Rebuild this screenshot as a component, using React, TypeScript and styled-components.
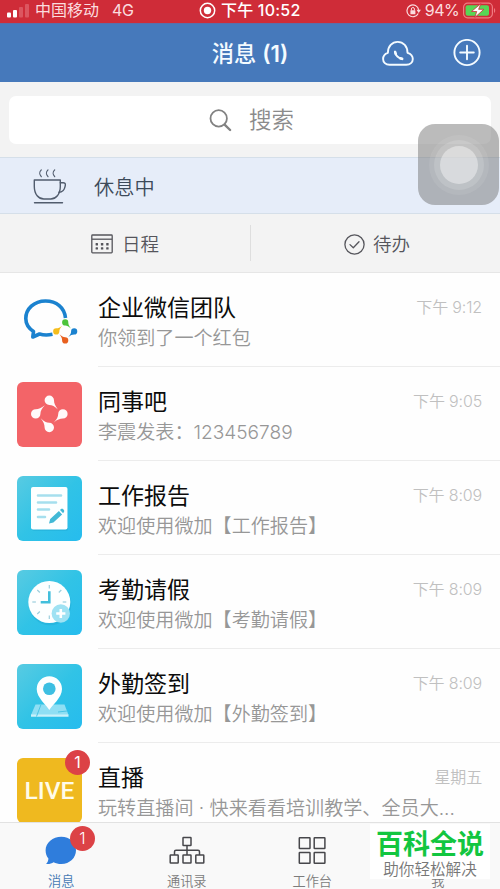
import React from 'react';
import styled, { createGlobalStyle } from 'styled-components';

const GlobalStyle = createGlobalStyle`
  * { box-sizing: border-box; }
  body {
    margin: 0;
    background: #fefefe;
    font-family: Inter, "Noto Sans CJK SC", sans-serif;
    overflow: hidden;
  }
  svg { display: block; flex: none; }
`;

const Screen = styled.div`
  position: relative;
  width: 500px;
  height: 889px;
  overflow: hidden;
  display: flex;
  flex-direction: column;
`;

const StatusBar = styled.div`
  flex: none;
  height: 23px;
  padding: 0 4px 2px 7px;
  display: grid;
  grid-template-columns: 192px 1fr auto;
  align-items: center;
  background: #cf2c38;
  color: #fbdcdf;
  font-size: 16px;
  line-height: 21px;
  white-space: nowrap;
`;

const StatusGroup = styled.div<{ $gap: number }>`
  display: flex;
  align-items: center;
  gap: ${(p) => p.$gap}px;
`;

const Clock = styled.span`
  color: #fff;
  font-weight: 500;
  letter-spacing: 0.2px;
`;

const Network = styled.span`
  margin-left: 7px;
  letter-spacing: -0.3px;
`;

const Percent = styled.span`
  letter-spacing: -0.6px;
`;

const NavBar = styled.header`
  flex: none;
  height: 59px;
  display: grid;
  grid-template-columns: 1fr auto 1fr;
  align-items: center;
  background: #4679bb;
  border-top: 1px solid #5c6ea8;
  color: #f4fbff;
`;

const NavTitle = styled.h1`
  grid-column: 2;
  margin: 1px 0 0;
  font-size: 22.3px;
  line-height: 30px;
  font-weight: 500;
`;

const NavCount = styled.span`
  font-weight: 600;
`;

const NavActions = styled.div`
  display: flex;
  justify-content: flex-end;
  align-items: center;
  gap: 39px;
  padding-right: 19px;
`;

const SearchArea = styled.div`
  flex: none;
  height: 75px;
  padding: 14px 9px 0;
  background: #f3f3f3;
`;

const SearchBox = styled.div`
  height: 48px;
  border-radius: 7px;
  background: #fff;
  display: flex;
  align-items: center;
  padding-left: 200px;
  gap: 17px;
  color: #8b8b8b;
  font-size: 22.5px;
  font-weight: 350;
  line-height: 30px;
`;

const Resting = styled.div`
  flex: none;
  height: 57px;
  padding: 2px 0 0 33px;
  display: flex;
  align-items: center;
  gap: 27px;
  background: #e6edf9;
  border-top: 1px solid #d5dfe9;
  border-bottom: 1px solid #d5dfe9;
  color: #3d4a5a;
  font-size: 20.2px;
  font-weight: 350;
`;

const Shortcuts = styled.div`
  flex: none;
  height: 59px;
  display: grid;
  grid-template-columns: 250px 1px 1fr;
  align-items: center;
  background: #f3f3f3;
  border-bottom: 1px solid #e6e6e6;
`;

const Shortcut = styled.div<{ $inset: number; $gap: number }>`
  display: flex;
  align-items: center;
  padding: 2px 0 0 ${(p) => p.$inset}px;
  gap: ${(p) => p.$gap}px;
  color: #55555b;
  font-size: 18.5px;
  font-weight: 350;
  line-height: 28px;
`;

const Divider = styled.div`
  height: 36px;
  background: #dedede;
`;

const List = styled.main`
  flex: 1;
  min-height: 0;
  overflow: hidden;
  background: #fefefe;
`;

const Row = styled.article`
  height: 94px;
  padding-left: 17px;
  display: flex;
  gap: 16px;
`;

const Avatar = styled.div<{ $bg: string }>`
  position: relative;
  flex: none;
  width: 65px;
  height: 65px;
  margin-top: 15px;
  border-radius: 6px;
  background: ${(p) => p.$bg};
  display: flex;
  align-items: center;
  justify-content: center;
`;

const LiveText = styled.span`
  color: #fffbe9;
  font-family: Roboto, sans-serif;
  font-size: 24.5px;
  font-weight: 500;
`;

const Badge = styled.span<{ $top: number; $left: number }>`
  position: absolute;
  top: ${(p) => p.$top}px;
  left: ${(p) => p.$left}px;
  width: 25px;
  height: 25px;
  border-radius: 50%;
  background: #dc4246;
  color: #fff;
  font-size: 16px;
  line-height: 25px;
  text-align: center;
`;

const RowBody = styled.div`
  flex: 1;
  min-width: 0;
  padding: 20px 18px 0 0;
  border-bottom: 1px solid #ececec;
`;

const RowHead = styled.div`
  display: flex;
  justify-content: space-between;
  align-items: center;
  height: 30px;
`;

const Name = styled.h2`
  margin: 0;
  font-size: 23px;
  line-height: 30px;
  font-weight: 400;
  color: #0c0c0c;
`;

const Time = styled.time`
  margin-top: -3px;
  font-size: 16px;
  font-weight: 350;
  line-height: 24px;
  letter-spacing: -0.15px;
  color: #c0c0c0;
`;

const Preview = styled.p`
  margin: 1px 0 0;
  font-size: 19.1px;
  font-weight: 350;
  line-height: 28px;
  color: #979797;
  white-space: nowrap;
`;

const TabBar = styled.nav`
  flex: none;
  height: 67px;
  display: grid;
  grid-template-columns: repeat(4, 125.5px);
  background: #f9f9f9;
  border-top: 1px solid #e2e2e2;
`;

const Tab = styled.div<{ $active?: boolean }>`
  position: relative;
  display: flex;
  flex-direction: column;
  align-items: center;
  padding-right: 3px;
  color: ${(p) => (p.$active ? '#4679b4' : '#7c7c7c')};
  font-size: 13.2px;
  font-weight: 350;
  line-height: 20px;
`;

const TabIcon = styled.div`
  height: 48px;
  padding-top: 12px;
`;

const Watermark = styled.div`
  position: absolute;
  left: 370px;
  top: 824px;
  width: 120px;
  height: 55px;
  padding-top: 5px;
  background: #fff;
  text-align: center;
  white-space: nowrap;
`;

const Brand = styled.div`
  color: #12c640;
  font-size: 27px;
  font-weight: 700;
  line-height: 32px;
`;

const Slogan = styled.div`
  color: #777;
  font-size: 15.6px;
  font-weight: 350;
  line-height: 17px;
`;

const AssistiveTouch = styled.div`
  position: absolute;
  left: 418px;
  top: 124px;
  width: 81px;
  height: 81px;
  border-radius: 17px;
  background: rgba(112, 112, 112, 0.48);
  display: flex;
  align-items: center;
  justify-content: center;
`;

const Ring = styled.div<{ $size: number; $alpha: number }>`
  width: ${(p) => p.$size}px;
  height: ${(p) => p.$size}px;
  flex: none;
  border-radius: 50%;
  background: rgba(255, 255, 255, ${(p) => p.$alpha});
  display: flex;
  align-items: center;
  justify-content: center;
`;

const Signal = () => (
  <svg width="22" height="15" viewBox="0 0 22 15">
    <rect x="0" y="9.5" width="4" height="5" rx="1" fill="#fff" />
    <rect x="6" y="7" width="4" height="7.5" rx="1" fill="#fff" />
    <rect x="12" y="4" width="4" height="10.5" rx="1" fill="#dc5660" />
    <rect x="18" y="1" width="4" height="13.5" rx="1" fill="#dc5660" />
  </svg>
);

const RecordIcon = () => (
  <svg width="17" height="17" viewBox="0 0 17 17">
    <circle cx="8.5" cy="8.5" r="7.2" fill="none" stroke="#fff" strokeWidth="1.5" />
    <circle cx="8.5" cy="8.5" r="3.7" fill="#fff" />
  </svg>
);

const RotationLock = () => (
  <svg width="15" height="14" viewBox="0 0 15 14" fill="none" stroke="#fbdcdf" strokeWidth="1.2">
    <path d="M12.2 9.4A5.9 5.9 0 1 1 12.7 5.8" />
    <path d="M10.5 5.8h4.4L12.7 9z" fill="#fbdcdf" stroke="none" />
    <rect x="4.4" y="6.2" width="5" height="4" rx=".5" fill="#fbdcdf" stroke="none" />
    <path d="M5.4 6.4V5a1.5 1.5 0 0 1 3 0v1.4" strokeWidth="1" />
  </svg>
);

const Battery = () => (
  <svg width="33" height="17" viewBox="0 0 33 17">
    <rect x=".6" y="1.2" width="28.8" height="14.6" rx="4" fill="none" stroke="#f07b82" strokeWidth="1.2" />
    <rect x="2.6" y="3.2" width="23.4" height="10.6" rx="2" fill="#58d655" />
    <path d="M31 6v5c1.6-.7 1.6-4.3 0-5z" fill="#f07b82" />
    <path d="M18 1.5 8.5 9.5h5.2l-1.9 6 9-8.2h-5.2z" fill="#fff" stroke="#cf2c38" strokeWidth=".8" />
  </svg>
);

const CloudCall = () => (
  <svg width="32" height="27" viewBox="0 0 32 27" fill="none" stroke="#f4fbff">
    <path d="M7.5 24.7C3.600 24.700 1.100 22.300 1.100 19c0-3 1.900-5.300 4.800-6.200C5.900 6.500 10 1.900 15.700 1.900s9.800 4.600 9.800 10.900c3 .9 5.300 3.200 5.300 6.200 0 3.300-2.600 5.700-6.500 5.700z" strokeWidth="1.9" strokeLinejoin="round" />
    <path d="M12.9 11.8c.5 3.500 3.700 6.700 7.300 7.200" strokeWidth="1.9" strokeLinecap="round" />
    <path d="M13.2 12l.6 2M18.300 18.300l1.800.5" strokeWidth="2.600" strokeLinecap="round" />
  </svg>
);

const PlusCircle = () => (
  <svg width="28" height="28" viewBox="0 0 28 28" fill="none" stroke="#f4fbff" strokeWidth="1.9">
    <circle cx="14" cy="13.5" r="12.6" />
    <path d="M14 6.7v13.6M7.2 13.5h13.6" strokeLinecap="round" />
  </svg>
);

const SearchIcon = () => (
  <svg width="23" height="23" viewBox="0 0 23 23" fill="none" stroke="#828282" strokeLinecap="round">
    <circle cx="9.7" cy="9.4" r="8.2" strokeWidth="1.8" />
    <path d="M15.6 15.7l5.5 5.3" strokeWidth="2.4" />
  </svg>
);

const CupIcon = () => (
  <svg width="34" height="36" viewBox="0 0 34 36" fill="none" stroke="#515c6d" strokeWidth="1.4" strokeLinecap="round">
    <path d="M1.3 11h26v6.500c0 8-4.600 12.500-9.500 12.500h-7c-5 0-9.500-4.500-9.500-12.500z" strokeLinejoin="round" />
    <path d="M27.300 13.800h3c2.600 0 2.200 1.900 1.800 3.600-.7 3.600-2.900 5.900-6.200 5.900M1.500 33.800h28" />
    <path d="M8.300.9C5.900 3.400 6 4.900 8.300 7.700M15 .9C12.600 3.400 12.700 4.900 15 7.700M21.700.9c-2.400 2.500-2.300 4 0 6.800" strokeWidth="1.2" />
  </svg>
);

const CalendarIcon = () => (
  <svg width="22" height="20" viewBox="0 0 22 20" fill="none" stroke="#55555b" strokeWidth="1.3">
    <rect x=".8" y="1" width="20.4" height="17.8" rx=".8" />
    <path d="M1 5.2h20" />
    <g fill="#55555b" stroke="none">
      {[4.6, 9.9, 15.2].map((x) => (
        <React.Fragment key={x}>
          <rect x={x} y="9" width="2.4" height="2.4" rx=".5" />
          <rect x={x} y="13.2" width="2.4" height="2.4" rx=".5" />
        </React.Fragment>
      ))}
    </g>
  </svg>
);

const CheckCircle = () => (
  <svg width="21" height="21" viewBox="0 0 21 21" fill="none" stroke="#55555b" strokeWidth="1.3">
    <circle cx="10.5" cy="10.5" r="9.6" />
    <path d="M6 10.6l3.3 3.2 5.700-6" strokeLinecap="round" strokeLinejoin="round" />
  </svg>
);

const DROP = 'M4.7-13.6C4.7-10.5 5.800-8.200 8.600-4.400 5.500-7.500 2.800-8.900 0-8.900A4.700 4.700 0 1 1 4.700-13.600z';

const WeComLogo = () => (
  <svg width="65" height="65" viewBox="0 0 65 65">
    <path d="M48.5 30C47.5 19.5 39.5 13 28.5 13 17 13 8.8 21 8.8 30.5c0 6 3.2 10 7.700 13L15.800 49l6.700-3c4 1.200 8.500 1.200 13 .3" fill="none" stroke="#1b82cf" strokeWidth="3.6" strokeLinejoin="round" />
    <g transform="translate(48.2 43.4) scale(.66)">
      <path d={DROP} fill="#4cc43a" />
      <path d={DROP} fill="#1b82cf" transform="rotate(90)" />
      <path d={DROP} fill="#e8601f" transform="rotate(180)" />
      <path d={DROP} fill="#f5bd1c" transform="rotate(270)" />
    </g>
  </svg>
);

const ColleagueLogo = () => (
  <svg width="65" height="65" viewBox="0 0 65 65">
    <g transform="translate(32.3 31.9)" fill="#fffafa">
      {[0, 90, 180, 270].map((a) => (
        <path key={a} d={DROP} transform={`rotate(${a})`} />
      ))}
    </g>
  </svg>
);

const ReportLogo = () => (
  <svg width="65" height="65" viewBox="0 0 65 65">
    <rect x="15" y="13" width="36" height="42" rx="2" fill="#169fc9" opacity=".3" />
    <rect x="14" y="11" width="36.5" height="42.5" rx="2" fill="#fdffff" />
    <path d="M21 19.5h23M21 26.5h18M21 33.5h11M21 41h7" stroke="#a5dfee" strokeWidth="2.6" strokeLinecap="round" />
    <path d="M32 47.5l1.200-4.400 8.700-8 3.200 3.400-8.700 8zM43 34l1-.9c1.600-1.200 4.200 1.200 2.900 2.900l-.8 1.200z" fill="#42b9d6" />
  </svg>
);

const ClockLogo = () => (
  <svg width="65" height="65" viewBox="0 0 65 65">
    <circle cx="33" cy="34" r="21.3" fill="#169fc9" opacity=".3" />
    <circle cx="32.3" cy="32" r="21" fill="#fdffff" />
    <g stroke="#9ccfdd" strokeWidth="1.2">
      {[0, 45, 90, 135, 180, 225, 270, 315].map((a) => (
        <path key={a} d="M32.3 15v3.6" transform={`rotate(${a} 32.3 32)`} />
      ))}
    </g>
    <path d="M32.3 21.3v11h-8.600" fill="none" stroke="#42bfdc" strokeWidth="2.6" />
    <circle cx="43.8" cy="43.5" r="9.2" fill="#9fe2f3" />
    <path d="M43.8 38.9v9.2M39.2 43.5h9.2" stroke="#fff" strokeWidth="2.6" />
  </svg>
);

const PinLogo = () => (
  <svg width="65" height="65" viewBox="0 0 65 65">
    <path d="M18.5 40.5h29l4 10.5H14z" fill="#8fdff4" />
    <path d="M14 50.5h37.5v2.3H14z" fill="#c9f1fa" />
    <path d="M24 40.5l-4.500 12M41 48l9-1" stroke="#4bc5e5" strokeWidth="1" />
    <path d="M32.3 46c-2.300-4.600-12.600-12.200-12.600-21.100a12.600 12.600 0 0 1 25.300 0c0 8.900-10.300 16.500-12.700 21.100z" fill="#fdffff" />
    <circle cx="32.3" cy="24.7" r="6.3" fill="#3cbfe2" />
  </svg>
);

const ChatIcon = () => (
  <svg width="32" height="31" viewBox="0 0 32 31">
    <path d="M16.3 1.800C24.800 1.800 31 7.700 31 15.300S24.800 29 16.300 29c-3 0-5.500-.6-7.700-1.800-2 1.400-4.600 2-7.500 1.700 1.500-1.600 2.300-3.300 2.300-5.400C1.500 21.300.6 18.500.6 15.300.6 7.700 7.800 1.800 16.300 1.800z" fill="#2f7ddc" />
  </svg>
);

const OrgIcon = () => (
  <svg width="36" height="30" viewBox="0 0 36 30" fill="none" stroke="#47474b" strokeWidth="1.5">
    <rect x="14" y="2.5" width="8" height="8" rx=".5" />
    <rect x="1.2" y="20" width="8" height="8" rx=".5" />
    <rect x="14" y="20" width="8" height="8" rx=".5" />
    <rect x="26.8" y="20" width="8" height="8" rx=".5" />
    <path d="M18 10.5V20M5.500 20v-3.300c0-1 .6-1.500 1.500-1.500h22c1 0 1.500.5 1.500 1.500V20" />
  </svg>
);

const GridIcon = () => (
  <svg width="28" height="30" viewBox="0 0 28 30" fill="none" stroke="#47474b" strokeWidth="1.5">
    <rect x="1.3" y="2.7" width="10.7" height="10.7" rx=".5" />
    <rect x="16.2" y="2.7" width="10.7" height="10.7" rx=".5" />
    <rect x="1.3" y="17.5" width="10.7" height="10.7" rx=".5" />
    <rect x="16.2" y="17.5" width="10.7" height="10.7" rx=".5" />
  </svg>
);

const SKY = 'linear-gradient(135deg, #58cbe2 0%, #31c3e6 50%, #26bcee 100%)';

const chats = [
  { name: '企业微信团队', time: '下午 9:12', text: '你领到了一个红包', bg: 'transparent', art: <WeComLogo /> },
  { name: '同事吧', time: '下午 9:05', text: '李震发表：123456789', bg: '#f36468', art: <ColleagueLogo /> },
  { name: '工作报告', time: '下午 8:09', text: '欢迎使用微加【工作报告】', bg: SKY, art: <ReportLogo /> },
  { name: '考勤请假', time: '下午 8:09', text: '欢迎使用微加【考勤请假】', bg: SKY, art: <ClockLogo /> },
  { name: '外勤签到', time: '下午 8:09', text: '欢迎使用微加【外勤签到】', bg: SKY, art: <PinLogo /> },
  { name: '直播', time: '星期五', text: '玩转直播间 · 快来看看培训教学、全员大...', bg: '#efb91f', art: <LiveText>LIVE</LiveText>, badge: 1 },
];

export default function App() {
  return (
    <Screen>
      <GlobalStyle />
      <StatusBar>
        <StatusGroup $gap={6}>
          <Signal />
          <span>中国移动</span>
          <Network>4G</Network>
        </StatusGroup>
        <StatusGroup $gap={5}>
          <RecordIcon />
          <Clock>下午 10:52</Clock>
        </StatusGroup>
        <StatusGroup $gap={4}>
          <RotationLock />
          <Percent>94%</Percent>
          <Battery />
        </StatusGroup>
      </StatusBar>
      <NavBar>
        <NavTitle>消息 <NavCount>(1)</NavCount></NavTitle>
        <NavActions>
          <CloudCall />
          <PlusCircle />
        </NavActions>
      </NavBar>
      <SearchArea>
        <SearchBox>
          <SearchIcon />
          <span>搜索</span>
        </SearchBox>
      </SearchArea>
      <Resting>
        <CupIcon />
        <span>休息中</span>
      </Resting>
      <Shortcuts>
        <Shortcut $inset={91} $gap={9}>
          <CalendarIcon />
          <span>日程</span>
        </Shortcut>
        <Divider />
        <Shortcut $inset={93} $gap={8}>
          <CheckCircle />
          <span>待办</span>
        </Shortcut>
      </Shortcuts>
      <List>
        {chats.map((chat) => (
          <Row key={chat.name}>
            <Avatar $bg={chat.bg}>
              {chat.art}
              {chat.badge && <Badge $top={-8} $left={48}>{chat.badge}</Badge>}
            </Avatar>
            <RowBody>
              <RowHead>
                <Name>{chat.name}</Name>
                <Time>{chat.time}</Time>
              </RowHead>
              <Preview>{chat.text}</Preview>
            </RowBody>
          </Row>
        ))}
      </List>
      <TabBar>
        <Tab $active>
          <TabIcon><ChatIcon /></TabIcon>
          <span>消息</span>
          <Badge $top={3} $left={70}>1</Badge>
        </Tab>
        <Tab>
          <TabIcon><OrgIcon /></TabIcon>
          <span>通讯录</span>
        </Tab>
        <Tab>
          <TabIcon><GridIcon /></TabIcon>
          <span>工作台</span>
        </Tab>
        <Tab>
          <TabIcon />
          <span>我</span>
        </Tab>
      </TabBar>
      <AssistiveTouch>
        <Ring $size={60} $alpha={0.08}>
          <Ring $size={50} $alpha={0.14}>
            <Ring $size={38} $alpha={0.4} />
          </Ring>
        </Ring>
      </AssistiveTouch>
      <Watermark>
        <Brand>百科全说</Brand>
        <Slogan>助你轻松解决</Slogan>
      </Watermark>
    </Screen>
  );
}
